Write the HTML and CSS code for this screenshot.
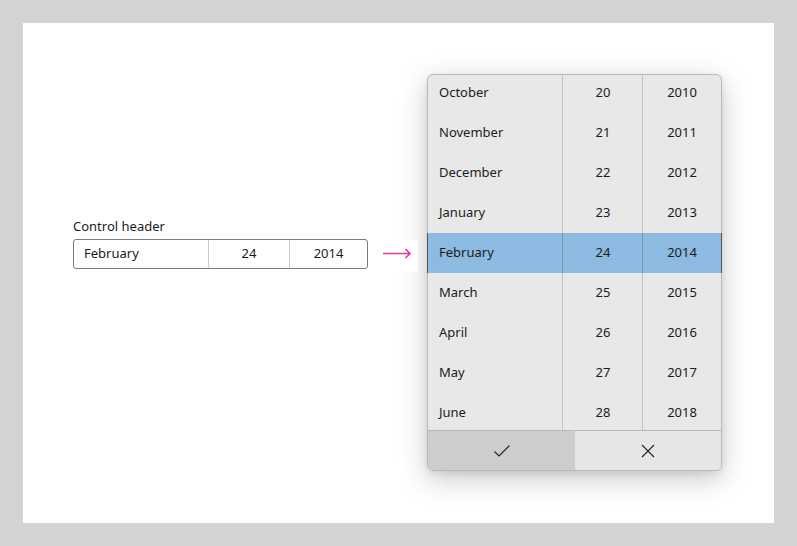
FILE: index.html
```html
<!DOCTYPE html>
<html>
<head>
<meta charset="utf-8">
<link rel="stylesheet" href="styles.css">
</head>
<body>
<div class="panel">
  <div class="control">
    <div class="header">Control header</div>
    <div class="field">
      <div class="f-month">February</div>
      <div class="f-day">24</div>
      <div class="f-year">2014</div>
    </div>
  </div>
  <div class="arrowbox">
    <svg width="32" height="12" viewBox="0 0 32 12"><path d="M2 6.5H29M24.5 2L29 6.5L24.5 11" fill="none" stroke="#e8359c" stroke-width="1.6"/></svg>
  </div>
  <div class="flyout">
    <div class="list">
      <div class="rows">
        <div class="row"><span class="c-m">October</span><span class="c-d">20</span><span class="c-y">2010</span></div>
        <div class="row"><span class="c-m">November</span><span class="c-d">21</span><span class="c-y">2011</span></div>
        <div class="row"><span class="c-m">December</span><span class="c-d">22</span><span class="c-y">2012</span></div>
        <div class="row"><span class="c-m">January</span><span class="c-d">23</span><span class="c-y">2013</span></div>
        <div class="row sel"><span class="c-m">February</span><span class="c-d">24</span><span class="c-y">2014</span></div>
        <div class="row"><span class="c-m">March</span><span class="c-d">25</span><span class="c-y">2015</span></div>
        <div class="row"><span class="c-m">April</span><span class="c-d">26</span><span class="c-y">2016</span></div>
        <div class="row"><span class="c-m">May</span><span class="c-d">27</span><span class="c-y">2017</span></div>
        <div class="row"><span class="c-m">June</span><span class="c-d">28</span><span class="c-y">2018</span></div>
      </div>
    </div>
    <div class="footer">
      <div class="btn ok"><svg width="18" height="14" viewBox="0 0 18 14"><path d="M1.5 7.5L6 12L16.5 1.5" fill="none" stroke="#222" stroke-width="1.1"/></svg></div>
      <div class="btn cancel"><svg width="14" height="14" viewBox="0 0 14 14"><path d="M1 1L13 13M13 1L1 13" fill="none" stroke="#222" stroke-width="1.1"/></svg></div>
    </div>
  </div>
</div>
</body>
</html>
```

FILE: styles.css
```css
html, body {
  margin: 0;
  padding: 0;
}
body {
  background: #d3d3d3;
  padding: 23px;
  font-family: "Noto Sans", "Segoe UI", "Open Sans", sans-serif;
  font-size: 13px;
  color: #1b1b1b;
  width: 751px;
  height: 500px;
}
.panel {
  background: #ffffff;
  width: 751px;
  height: 500px;
  display: flex;
  align-items: flex-start;
  padding-left: 50px;
  box-sizing: border-box;
}
.control {
  margin-top: 193px;
  width: 295px;
}
.header {
  line-height: 20px;
  height: 20px;
  margin-bottom: 3px;
}
.field {
  display: flex;
  height: 30px;
  border: 1px solid #7a7a7a;
  border-radius: 3px;
  box-sizing: border-box;
}
.f-month,
.f-day,
.f-year {
  height: 100%;
  line-height: 27px;
}
.f-month {
  width: 135px;
  padding-left: 10px;
  box-sizing: border-box;
  border-right: 1px solid #cccccc;
}
.f-day {
  width: 80px;
  text-align: center;
  border-right: 1px solid #cccccc;
}
.f-year {
  flex: 1;
  text-align: center;
}
.arrowbox {
  margin-top: 217px;
  margin-left: 2px;
  width: 48px;
  height: 32px;
  background: #fff;
  position: relative;
  z-index: 2;
  display: flex;
  align-items: flex-start;
  padding-top: 7px;
  padding-left: 11px;
  box-sizing: border-box;
}
.flyout {
  margin-top: 51px;
  margin-left: 9px;
  width: 295px;
  height: 397px;
  border: 1px solid #b9b9b9;
  border-radius: 6px;
  box-sizing: border-box;
  background: #e8e8e8;
  box-shadow: 0 8px 28px rgba(0, 0, 0, 0.22), 0 2px 6px rgba(0, 0, 0, 0.08);
  display: flex;
  flex-direction: column;
  position: relative;
  z-index: 1;
}
.flyout::before {
  content: "";
  position: absolute;
  top: 158px;
  left: -1px;
  right: -1px;
  height: 40px;
  border-left: 1px solid #555555;
  border-right: 1px solid #555555;
  z-index: 2;
}
.list {
  height: 355px;
  overflow: hidden;
  border-bottom: 1px solid #b9b9b9;
  border-radius: 5px 5px 0 0;
  background: linear-gradient(to right, transparent 134px, #c3c3c3 134px, #c3c3c3 135px, transparent 135px, transparent 214px, #c3c3c3 214px, #c3c3c3 215px, transparent 215px);
}
.rows {
  margin-top: -2px;
}
.row {
  display: flex;
  height: 40px;
  line-height: 38px;
  padding-bottom: 2px;
  box-sizing: border-box;
}
.c-m {
  width: 135px;
  padding-left: 11px;
  box-sizing: border-box;
}
.c-d {
  width: 80px;
  text-align: center;
}
.c-y {
  width: 78px;
  text-align: center;
}
.row.sel {
  background: linear-gradient(to right, #8cbae1 0, #8cbae1 134px, #7d97ad 134px, #7d97ad 135px, #8cbae1 135px, #8cbae1 214px, #7d97ad 214px, #7d97ad 215px, #8cbae1 215px);
}
.footer {
  flex: 1;
  display: flex;
  border-radius: 0 0 5px 5px;
  overflow: hidden;
}
.btn {
  display: flex;
  align-items: center;
  justify-content: center;
  height: 100%;
}
.ok {
  width: 147px;
  background: #cdcdcd;
}
.cancel {
  flex: 1;
  background: #e6e6e6;
}
```
